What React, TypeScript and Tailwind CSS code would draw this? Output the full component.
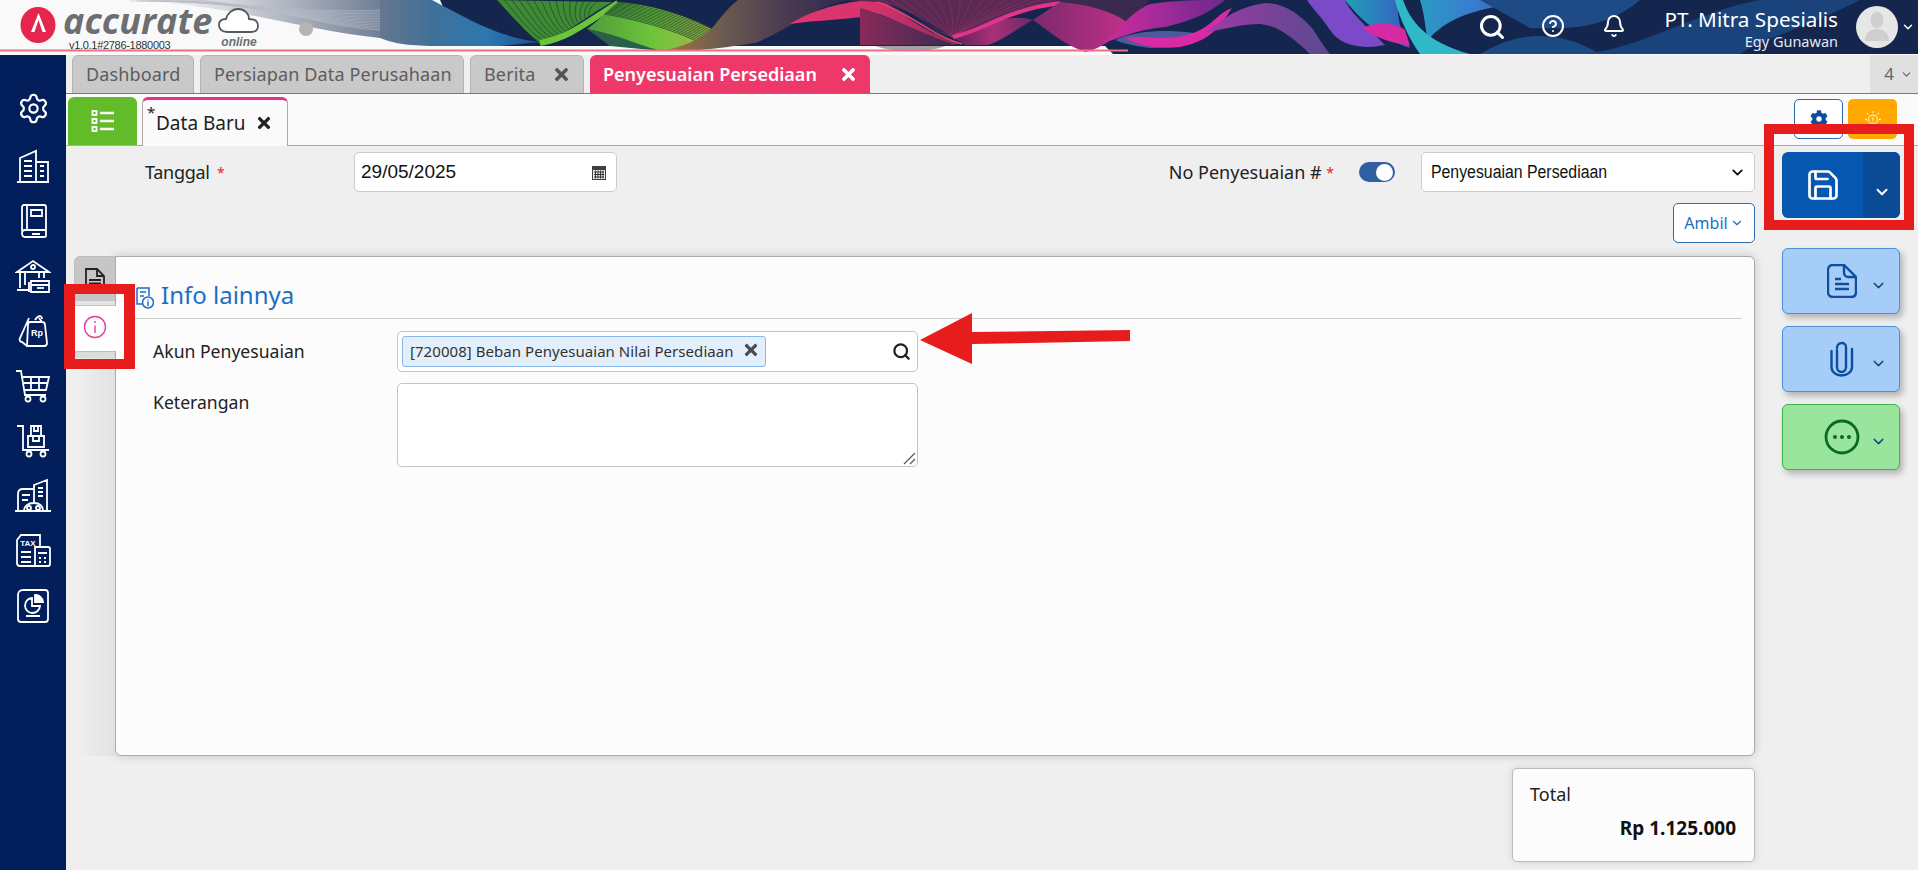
import { Bell, ChevronDown, CircleHelp, Save, Search, Settings } from "lucide-react";
import { FaCog, FaTimes } from "react-icons/fa";

type Curve = number[];

// fan of thin lines between two bezier curves
const Ribbon = ({ from, to, stroke, n = 16, opacity = 0.8 }: { from: Curve; to: Curve; stroke: string; n?: number; opacity?: number }) => {
  const lines = [];
  for (let i = 0; i <= n; i++) {
    const t = i / n;
    const p = from.map((v, k) => Math.round((v + (to[k] - v) * t) * 10) / 10);
    lines.push(
      <path key={i} d={`M${p[0]} ${p[1]}C${p[2]} ${p[3]} ${p[4]} ${p[5]} ${p[6]} ${p[7]}`} stroke={stroke} fill="none" strokeWidth="1" opacity={opacity} />
    );
  }
  return <g>{lines}</g>;
};

const Grad = ({ id, stops }: { id: string; stops: string[] }) => (
  <linearGradient id={id} x1="0" x2="1" y1="0" y2="0">
    {stops.map((c, i) => (
      <stop key={i} offset={i / (stops.length - 1)} stopColor={c} />
    ))}
  </linearGradient>
);

const Banner = () => (
  <svg className="absolute inset-0" width="1918" height="55" viewBox="0 0 1918 55">
    <defs>
      <Grad id="lg" stops={["#f8f8f8", "#dcdee2", "#a9b0bd", "#6f7f97"]} />
      <Grad id="blueR" stops={["#66778f", "#3f7198", "#2b78b0", "#1d4f92"]} />
      <Grad id="gr2" stops={["#4f9a3a", "#6cc43a", "#a5b84a"]} />
      <Grad id="olive" stops={["#a87a3a", "#6a5a50", "#4a3a50", "#2a2a50"]} />
      <Grad id="pinkA" stops={["#e0356f", "#d6336c", "#8a2a5a"]} />
      <Grad id="maroon" stops={["#8a2a5a", "#3a2a50"]} />
      <Grad id="plum" stops={["#5a2558", "#a83078", "#6a2a66"]} />
      <Grad id="mid" stops={["#7a2a6a", "#c0308a"]} />
      <Grad id="mag" stops={["#d02a9a", "#a02a9a", "#6a2a8a"]} />
      <Grad id="purple" stops={["#a03aa8", "#7a4298", "#5a4a90"]} />
      <Grad id="teal" stops={["#1fa0b8", "#3a5ac0"]} />
      <Grad id="tealB" stops={["#2a9ac4", "#3a7ad0", "#2a5aa8"]} />
    </defs>
    <rect width="1918" height="55" fill="#f9f9f9" />
    <path d="M130 0C240 6 300 30 380 38L380 0Z" fill="url(#lg)" />
    <Ribbon from={[130, 1, 230, 0, 300, 14, 380, 10]} to={[200, 0, 280, 8, 330, 28, 380, 30]} stroke="#b8bcc4" n={12} opacity={0.55} />
    <path d="M440 0L1918 0L1918 54L1113 54L1105 46L460 46Z" fill="#14264e" />
    {/* blue ribbon next to the logo */}
    <path d="M380 0L432 0C470 20 500 38 540 42L500 46L440 46C410 46 395 44 380 38Z" fill="url(#blueR)" />
    {/* green */}
    <path d="M497 0L612 2C590 14 565 35 540 44C525 30 510 15 497 0Z" fill="#3f8a35" />
    <Ribbon from={[497, 0, 515, 20, 530, 40, 545, 44]} to={[600, 0, 590, 5, 585, 15, 592, 22]} stroke="#16382a" n={14} opacity={0.6} />
    <path d="M540 43C570 38 590 20 618 3" stroke="#6cc43a" strokeWidth="6" fill="none" />
    <path d="M618 2C660 5 695 20 714 30C710 40 690 48 660 51C640 48 615 35 587 29C600 20 610 8 618 2Z" fill="url(#gr2)" />
    <Ribbon from={[618, 2, 660, 5, 695, 20, 714, 28]} to={[604, 14, 640, 20, 680, 32, 702, 44]} stroke="#16382a" n={12} opacity={0.65} />
    <path d="M587 29C620 35 640 46 662 51L610 46Z" fill="#2a5f4a" />
    {/* olive into pink */}
    <path d="M660 51C700 52 735 46 755 43C775 35 790 25 800 20C815 10 830 4 850 0L738 0C725 10 718 22 712 28C700 40 680 48 660 51Z" fill="url(#olive)" />
    <path d="M790 24C815 8 850 0 880 0C910 18 930 36 960 43L953 45C925 40 905 24 880 14C850 20 815 20 790 24Z" fill="url(#pinkA)" />
    <path d="M860 8C885 14 925 35 955 45L860 45Z" fill="url(#maroon)" />
    <path d="M847 0L1060 0C1030 8 1000 15 953 37C925 20 900 5 877 2Z" fill="#5a2a55" />
    <Ribbon from={[880, 0, 920, 22, 935, 32, 953, 37]} to={[1040, 0, 1000, 12, 975, 24, 953, 37]} stroke="#c0346f" n={14} opacity={0.35} />
    <path d="M877 2C905 10 930 35 962 44" stroke="#e8456f" strokeWidth="1.5" fill="none" />
    <path d="M875 46L945 46C930 52 900 54 875 46Z" fill="#a2a2a8" />
    <path d="M953 38C985 28 1005 12 1033 20C1015 30 1000 42 987 45L965 45Z" fill="url(#plum)" />
    <path d="M953 37C985 30 1005 10 1060 3" stroke="#e0358a" strokeWidth="4" fill="none" />
    {/* middle ribbon */}
    <path d="M1060 0L1150 0L1127 22C1110 10 1085 4 1060 2Z" fill="#3a2a50" />
    <path d="M1033 20L1060 2C1085 4 1110 10 1127 22C1118 34 1105 48 1085 52C1065 45 1050 32 1033 20Z" fill="url(#mid)" />
    <path d="M1103 43C1120 30 1130 12 1150 4C1175 0 1200 0 1225 0C1210 12 1195 20 1165 27C1135 30 1120 38 1103 43Z" fill="url(#mag)" />
    <path d="M1115 40C1140 28 1180 30 1200 34C1190 45 1165 48 1150 48C1135 46 1125 44 1115 40Z" fill="#4a5a9a" />
    <path d="M1125 38C1150 34 1170 44 1200 30C1215 22 1220 12 1232 8C1222 22 1215 40 1180 47C1155 50 1135 44 1125 38Z" fill="#d92aa5" />
    {/* purple + teal */}
    <path d="M1205 33C1225 18 1235 8 1265 3C1285 3 1300 15 1312 28C1320 40 1325 48 1330 54L1310 54C1295 40 1280 26 1260 24C1240 24 1220 30 1205 33Z" fill="url(#purple)" />
    <path d="M1307 0L1345 0C1350 12 1365 25 1385 45C1360 50 1340 45 1330 30C1320 15 1312 8 1307 0Z" fill="#7a4ac8" />
    <path d="M1345 0L1400 0C1395 12 1400 30 1410 48C1385 40 1362 22 1345 0Z" fill="url(#teal)" />
    <path d="M1362 28C1375 22 1395 22 1405 30L1410 46C1390 42 1375 38 1362 28Z" fill="#d62aa5" />
    <path d="M1428 40C1445 20 1470 8 1530 2L1490 0L1420 0C1425 15 1425 30 1428 40Z" fill="url(#tealB)" />
    <path d="M1403 0C1410 20 1425 42 1470 54L1420 54C1410 40 1400 20 1395 0Z" fill="#30b8c8" />
    {/* blue wedges behind the icons */}
    <path d="M1480 54C1520 30 1560 30 1600 54Z" fill="#1c4a82" />
    <path d="M1480 0L1640 0C1610 25 1580 30 1530 28Z" fill="#1e4a86" />
    <path d="M1580 54C1640 50 1700 10 1760 0L1860 0C1800 30 1760 40 1740 54Z" fill="#1b437b" />
    <path d="M0 50.5H1128" stroke="#ee6f86" strokeWidth="2.2" />
  </svg>
);

const Logo = () => (
  <div className="relative z-10 flex w-[320px] items-start pl-[20px]">
    <svg width="36" height="36" viewBox="0 0 36 36" className="mt-[7px] shrink-0">
      <ellipse cx="18" cy="18" rx="17.5" ry="18" fill="#e6254c" />
      <path d="M18.5 6L26 25H22.5L18.5 13L14.5 25H11Z" fill="#fff" />
    </svg>
    <div className="ml-[7px] flex w-[155px] shrink-0 flex-col">
      <span className="mt-[4px] w-fit font-['Open_Sans',sans-serif] text-[36px] leading-[33px] font-bold whitespace-nowrap text-[#6d6e71] italic">accurate</span>
      <span className="mt-[2px] ml-[6px] font-['Liberation_Sans',sans-serif] text-[11px] leading-[13px] tracking-[-0.3px] whitespace-nowrap text-[#333]">v1.0.1#2786-1880003</span>
    </div>
    <div className="flex flex-col items-center">
      <svg width="42" height="27" viewBox="0 0 42 27" className="mt-[7px]">
        <path d="M9 25C3 25 1 21 1 18C1 14 4 12 8 12C9 7 14 2 20 2C27 2 31 7 31 12C37 12 40 15 40 19C40 23 37 25 33 25Z" fill="#fff" stroke="#55585c" strokeWidth="1.8" />
      </svg>
      <span className="mt-[1px] font-['Liberation_Sans',sans-serif] text-[12px] leading-[14px] font-bold text-[#6d6e71] italic">online</span>
    </div>
    <span className="mt-[22px] ml-[39px] h-[14px] w-[14px] shrink-0 rounded-full bg-[#b4b4b4]" />
  </div>
);

const Header = () => (
  <header className="relative flex h-[55px] shrink-0 items-start">
    <Banner />
    <Logo />
    <div className="relative z-10 ml-auto flex items-start text-white">
      <Search className="mt-[13px] mr-[35px]" size={28} strokeWidth={2.6} />
      <CircleHelp className="mt-[14px] mr-[37px]" size={24} strokeWidth={2} />
      <Bell className="mt-[14px] mr-[38px]" size={24} strokeWidth={2} />
      <div className="mt-[5px] mr-[18px] flex flex-col items-end">
        <span className="text-[20.7px] leading-[28px]">PT. Mitra Spesialis</span>
        <span className="text-[14.5px] leading-[17px] text-[#e4e9f2]">Egy Gunawan</span>
      </div>
      <div className="mt-[6px] flex h-[42px] w-[42px] items-center justify-center overflow-hidden rounded-full bg-[#e6e6e6]">
        <svg width="26" height="32" viewBox="0 0 26 32">
          <ellipse cx="13" cy="9" rx="6.5" ry="8" fill="#cfcfcf" />
          <path d="M1 30C1 22 6 18 13 18C20 18 25 22 25 30Z" fill="#cfcfcf" />
        </svg>
      </div>
      <ChevronDown className="mt-[20px] mr-[3px] ml-[3px]" size={14} strokeWidth={2.5} />
    </div>
  </header>
);

const icon = "fill-none stroke-white stroke-[1.8]";

const CityIcon = () => (
  <svg width="36" height="36" viewBox="0 0 36 36" className={icon}>
    <path d="M2 34H34M5 34V10L21 3V34M21 14H33V34M9 13H17M9 18H17M9 23H17M9 28H17M25 18H29M25 23H29M25 28H29" />
  </svg>
);
const BookIcon = () => (
  <svg width="36" height="36" viewBox="0 0 36 36" className={icon}>
    <path d="M7 28V4C7 3 8 2 9 2H29C30 2 31 3 31 4V33C31 34 30 34 29 34H10C8 34 7 32 7 30C7 28 8 27 10 27H31M12 2V27M16 7H27V13H16ZM17 31H25" />
  </svg>
);
const BankIcon = () => (
  <svg width="36" height="36" viewBox="0 0 36 36" className={icon}>
    <path d="M2 14L18 3L34 14ZM5 14V30M10 14V27M24 14V20M29 14V20M2 32H14M14 34V24M16 23H34V34H16ZM16 27H34" />
    <circle cx="18" cy="9" r="2" />
    <path d="M22 30H29" />
  </svg>
);
const TagIcon = () => (
  <svg width="36" height="36" viewBox="0 0 36 36" className={icon}>
    <path d="M14 5L5 25C4 27 5 29 7 29L12 33M12 33H29C31 33 32 32 32 30L30 12C30 10 29 9 27 9H15C14 9 13 10 13 12L12 33ZM24 5L27 9M20 7C23 2 27 2 27 6" />
    <text x="22" y="23" textAnchor="middle" fontSize="9" fontWeight="700" fill="#fff" stroke="none" fontFamily="Liberation Sans, sans-serif">Rp</text>
  </svg>
);
const CartIcon = () => (
  <svg width="36" height="36" viewBox="0 0 36 36" className={icon}>
    <path d="M1 3H6L10 27H31M8 9H34L31 22H10M16 9V22M24 9V22M9 15H33" />
    <circle cx="13" cy="31" r="2.5" />
    <circle cx="28" cy="31" r="2.5" />
  </svg>
);
const TrolleyIcon = () => (
  <svg width="36" height="36" viewBox="0 0 36 36" className={icon}>
    <path d="M2 3H8V27H34M13 13H29V24H13ZM16 3H26V13H16ZM19 3V8H23V3M18 13V18H24V13" />
    <circle cx="14" cy="31" r="2.5" />
    <circle cx="28" cy="31" r="2.5" />
  </svg>
);
const PlantIcon = () => (
  <svg width="38" height="36" viewBox="0 0 38 36" className={icon}>
    <path d="M1 33H37M4 33V16C4 13 6 11 9 11H20V24M8 17H16M8 22H14M20 11V7L33 2V33M24 10H29M24 14H29M24 18H29M10 33C10 28 14 25 20 25C26 25 29 28 29 33" />
    <circle cx="15" cy="30" r="2" />
    <circle cx="24" cy="30" r="2" />
  </svg>
);
const TaxIcon = () => (
  <svg width="36" height="36" viewBox="0 0 36 36" className={icon}>
    <path d="M20 33H5C3 33 2 32 2 30V7L6 2H25V13M6 19H16M6 24H16M6 29H16M20 14H33C34 14 35 15 35 16V31C35 33 34 33 33 33H20ZM23 20H32M24 25H26M29 25H31M24 29H26M29 29H31" />
    <text x="13" y="13" textAnchor="middle" fontSize="8" fontWeight="700" fill="#fff" stroke="none" fontFamily="Liberation Sans, sans-serif">TAX</text>
  </svg>
);
const ReportIcon = () => (
  <svg width="36" height="36" viewBox="0 0 36 36" className={icon}>
    <path d="M8 2H30C32 2 33 3 33 5V31C33 33 32 34 30 34H6C4 34 3 33 3 31V7C3 4 5 2 8 2ZM11 28H25" />
    <path d="M17 10A7.5 7.5 0 1 0 25 18H17Z" />
    <path d="M20 7A7.5 7.5 0 0 1 28 14H20Z" fill="#fff" />
  </svg>
);

const Sidebar = () => (
  <aside className="flex w-[66px] shrink-0 flex-col items-center bg-[#021e5b] pt-[26px]">
    <div className="mb-[2px] flex h-[55px] items-center"><Settings className="text-white" size={33} strokeWidth={1.6} /></div>
    {[CityIcon, BookIcon, BankIcon, TagIcon, CartIcon, TrolleyIcon, PlantIcon, TaxIcon, ReportIcon].map((Icon, i) => (
      <div key={i} className="flex h-[55px] items-center"><Icon /></div>
    ))}
  </aside>
);

const TopTab = ({ label, close, active, width }: { label: string; close?: boolean; active?: boolean; width: string }) => (
  <div className={`flex h-[38px] items-center justify-between rounded-t-[6px] pr-[12px] pl-[13px] text-[18px] ${width} ${active ? "bg-[#ee3869] font-semibold text-white" : "border border-b-0 border-[#b5b5b5] bg-[#c9c9c9] tracking-[0.15px] text-[#5d5d5d]"}`}>
    <span className="whitespace-nowrap">{label}</span>
    {close && <FaTimes size={19} className={active ? "text-white" : "text-[#555]"} />}
  </div>
);

const TopTabs = () => (
  <div className="flex h-[39px] shrink-0 items-end border-b-[1.5px] border-[#d74a80]">
    <div className="ml-[6px] flex gap-[6px]">
      <TopTab label="Dashboard" width="w-[122px]" />
      <TopTab label="Persiapan Data Perusahaan" width="w-[264px]" />
      <TopTab label="Berita" close width="w-[114px]" />
      <TopTab label="Penyesuaian Persediaan" close active width="w-[280px]" />
    </div>
    <div className="ml-auto flex h-[38px] w-[48px] items-center justify-end gap-[6px] bg-[#e0e0e0] pr-[5px] text-[17px] text-[#666]">
      <span>4</span>
      <ChevronDown size={13} />
    </div>
  </div>
);

const ListIcon = () => (
  <svg width="24" height="24" viewBox="0 0 24 24" fill="none" stroke="#fff">
    <rect x="1.5" y="2" width="4" height="4" strokeWidth="1.8" />
    <rect x="1.5" y="10" width="4" height="4" strokeWidth="1.8" />
    <rect x="1.5" y="18" width="4" height="4" strokeWidth="1.8" />
    <path d="M9 4H23M9 12H23M9 20H23" strokeWidth="2.6" />
  </svg>
);

const SubTabs = () => (
  <div className="flex h-[52px] shrink-0 items-start justify-between border-b-[1.5px] border-[#aaaaaa] bg-[#fafafa] pr-[21px] pl-[2px]">
    <div className="mt-[3px] flex gap-[5px]">
      <div className="flex h-[48px] w-[69px] items-center justify-center rounded-t-[6px] bg-[#62bb28]"><ListIcon /></div>
      <div className="relative flex h-[49px] w-[146px] items-center rounded-t-[6px] border-x border-t-[3px] border-x-[#aaa] border-t-[#e5338c] bg-[#fafafa] pl-[13px] text-[19px] text-[#222]">
        <span className="absolute top-[5px] left-[4px] text-[15px] leading-[15px]">*</span>
        <span>Data Baru</span>
        <FaTimes size={18} className="ml-[9px] text-[#222]" />
      </div>
    </div>
    <div className="mt-[5px] flex gap-[5px]">
      <div className="flex h-[40px] w-[49px] items-center justify-center rounded-[5px] border border-[#2d6aa8] bg-white text-[#0d4f9e]"><FaCog size={18} /></div>
      <div className="flex h-[40px] w-[49px] items-center justify-center rounded-[5px] bg-[#ffa800]">
        <svg width="18" height="18" viewBox="0 0 18 18" fill="none" stroke="#ffe9a8" strokeWidth="1.3">
          <circle cx="9" cy="9.5" r="4.5" />
          <path d="M9 7V10.5M9 11.2V12.4M9 1V3M3 3L4.3 4.4M15 3L13.7 4.4M1 9.5H3M15 9.5H17" />
        </svg>
      </div>
    </div>
  </div>
);

const CalendarIcon = () => (
  <svg width="16" height="17" viewBox="0 0 16 17">
    <path d="M1 2H15V16H1Z" fill="#3f3f3f" />
    <rect x="2" y="6" width="12" height="9" fill="#eee" />
    <path d="M3 8H13M3 10.5H13M3 13H13M4.5 6.5V14.5M7 6.5V14.5M9.5 6.5V14.5M12 6.5V14.5" stroke="#333" strokeWidth="1" />
  </svg>
);

const Star = () => <span className="align-[1px] text-[14px] text-[#e5232e]">*</span>;

const FormTop = () => (
  <div className="flex h-[40px] items-center pl-[79px]">
    <label className="w-[209px] text-[18px] tracking-[-0.3px] text-[#222]">Tanggal <span className="ml-[3px]"><Star /></span></label>
    <div className="flex h-[40px] w-[263px] items-center justify-between rounded-[5px] border border-[#ccc] bg-white pr-[9px] pl-[6px] font-['Liberation_Sans',sans-serif] text-[19px] text-[#111]">
      29/05/2025
      <CalendarIcon />
    </div>
    <label className="ml-auto text-[18px] whitespace-nowrap text-[#222]">No Penyesuaian # <Star /></label>
    <div className="mr-[26px] ml-[25px] flex h-[20px] w-[36px] items-center justify-end rounded-full bg-[#2f5ea3] pr-[2px]">
      <span className="h-[17px] w-[17px] rounded-full bg-white" />
    </div>
    <div className="flex h-[40px] w-[334px] items-center justify-between rounded-[5px] border border-[#ccc] bg-white pr-[8px] pl-[9px] font-['Liberation_Sans',sans-serif] text-[18px] text-[#111]">
      <span className="origin-left scale-x-[0.88] whitespace-nowrap">Penyesuaian Persediaan</span>
      <ChevronDown size={17} strokeWidth={2.6} />
    </div>
  </div>
);

const InfoTitleIcon = () => (
  <svg width="18" height="22" viewBox="0 0 18 22" fill="none" stroke="#1a6fc4" strokeWidth="1.5">
    <path d="M1 1H13V9M1 1V17H6M4 5H10M4 9H8" />
    <circle cx="12" cy="15.5" r="5.5" />
    <path d="M12 14.5V19M12 12.5V13.5" />
  </svg>
);

const FormPanel = () => (
  <div className="mt-[13px] ml-[8px] flex h-[500px]">
    <div className="z-10 flex w-[41px] shrink-0 flex-col bg-gradient-to-r from-[#f0f0f0] to-[#e2e2e2]">
      <div className="flex h-[44px] items-start justify-center rounded-tl-[6px] border-t border-l border-[#bdbdbd] bg-[#c6c6c6] pt-[11px]">
        <svg width="20" height="24" viewBox="0 0 20 24" fill="none" stroke="#222" strokeWidth="1.8">
          <path d="M1 1H12L19 8V23H1ZM12 1V8H19M4 12H16M4 15.5H16M4 19H16" />
        </svg>
      </div>
      <div className="h-[6px] border-y border-l border-[#c4c4c4] bg-[#e4e4e4]" />
      <div className="-mr-[2px] flex h-[45px] items-center justify-center bg-white pr-[2px] pb-[3px]">
        <svg width="24" height="24" viewBox="0 0 24 24" fill="none" stroke="#e33f9b" strokeWidth="1.4">
          <circle cx="12" cy="12" r="10.5" />
          <path d="M12 10.5V18M12 6V8" />
        </svg>
      </div>
      <div className="h-[7px] rounded-tl-[3px] border-t border-l border-[#bdbdbd] bg-[#dcdcdc]" />
    </div>
    <div className="flex-1 rounded-r-[6px] rounded-bl-[6px] border border-[#aaaaaa] bg-[#fcfcfc] pr-[12px] pl-[18px] shadow-[0_0_10px_rgba(0,0,0,0.18)]">
      <div className="flex h-[62px] items-end border-b border-[#d0d0d0] pb-[6px] pl-[2px] text-[24px] leading-[34px] text-[#1a6fc4]">
        <span className="mr-[7px] mb-[3px]"><InfoTitleIcon /></span>
        Info lainnya
      </div>
      <div className="mt-[12px] flex items-center pl-[19px]">
        <label className="w-[244px] text-[17.6px] text-[#222]">Akun Penyesuaian</label>
        <div className="flex h-[41px] w-[521px] items-center justify-between rounded-[5px] border border-[#c4c4c4] bg-white pr-[6px] pl-[4px]">
          <div className="flex h-[31px] w-[364px] items-center justify-between rounded-[3px] border border-[#8ab8ea] bg-[#e3effb] pr-[5px] pl-[7px] text-[15px] tracking-[0.05px] whitespace-nowrap text-[#333]">
            [720008] Beban Penyesuaian Nilai Persediaan
            <FaTimes size={18} className="mb-[3px] text-[#4b4b57]" />
          </div>
          <Search size={19} strokeWidth={2.8} className="text-[#222]" />
        </div>
      </div>
      <div className="mt-[11px] flex items-start pl-[19px]">
        <label className="mt-[6px] w-[244px] text-[17.6px] text-[#222]">Keterangan</label>
        <div className="relative h-[84px] w-[521px] rounded-[5px] border border-[#c4c4c4] bg-white">
          <svg width="14" height="14" viewBox="0 0 14 14" className="absolute right-[1px] bottom-[1px]" stroke="#555" strokeWidth="1.2">
            <path d="M2 13L13 2M8 13L13 8" />
          </svg>
        </div>
      </div>
    </div>
  </div>
);

const DocIcon = () => (
  <svg width="30" height="34" viewBox="0 0 30 34" fill="none" stroke="#0d4f9e" strokeWidth="2.4">
    <path d="M6 1H17L29 13V28C29 31 27 33 24 33H6C3 33 1 31 1 28V6C1 3 3 1 6 1ZM17 1V9C17 11 19 13 21 13H29M8 15H14M8 20H22M8 25H22" />
  </svg>
);

const ClipIcon = () => (
  <svg width="24" height="36" viewBox="0 0 24 36" fill="none" stroke="#0d4f9e" strokeWidth="2.4" strokeLinecap="round">
    <path d="M7 9V26C7 29 9 31 11.5 31C14 31 16 29 16 26V6C16 3.5 14 2 12 2C9 2 7 4 7 7M1.5 10V26C1.5 31 6 34.5 11.5 34.5C17 34.5 22 31 22 26V8" />
  </svg>
);

const DotsIcon = () => (
  <svg width="36" height="36" viewBox="0 0 36 36" fill="none" stroke="#0a6b1e" strokeWidth="2.8">
    <circle cx="18" cy="18" r="16" />
    <circle cx="11" cy="18" r="2" fill="#0a6b1e" stroke="none" />
    <circle cx="18" cy="18" r="2" fill="#0a6b1e" stroke="none" />
    <circle cx="25" cy="18" r="2" fill="#0a6b1e" stroke="none" />
  </svg>
);

const ActionBtn = ({ color, children }: { color: "blue" | "green"; children: React.ReactNode }) => (
  <div className={`flex h-[66px] w-[118px] items-center rounded-[6px] border pl-[41px] shadow-[3px_4px_6px_rgba(0,0,0,0.25)] ${color === "blue" ? "border-[#4a90d9] bg-[#a6cdf8]" : "border-[#3cb54a] bg-[#9ae59e]"}`}>
    <div className="flex w-[36px] justify-center">{children}</div>
    <ChevronDown size={17} strokeWidth={2} className="mt-[8px] ml-[10px] text-[#1a4a80]" />
  </div>
);

const ActionColumn = () => (
  <div className="flex w-[163px] shrink-0 flex-col items-start pt-[6px] pl-[27px]">
    <div className="flex h-[66px] w-[118px] overflow-hidden rounded-[6px] bg-[#0557b0] text-white">
      <div className="flex w-[81px] items-center justify-center"><Save size={36} strokeWidth={1.8} /></div>
      <div className="flex w-[37px] items-center justify-center bg-[#0b4b96] pt-[14px]"><ChevronDown size={18} strokeWidth={2.6} /></div>
    </div>
    <div className="mt-[30px] flex flex-col gap-[12px]">
      <ActionBtn color="blue"><DocIcon /></ActionBtn>
      <ActionBtn color="blue"><ClipIcon /></ActionBtn>
      <ActionBtn color="green"><DotsIcon /></ActionBtn>
    </div>
  </div>
);

// annotations drawn on top of the screenshot
const Annotations = () => (
  <>
    <div className="absolute top-[284px] left-[64px] z-20 h-[85px] w-[71px] border-x-[11px] border-t-[10px] border-b-[10px] border-[#e71c1c]" />
    <div className="absolute top-[124px] left-[1764px] z-20 h-[106px] w-[150px] border-[10px] border-[#e71c1c]" />
    <svg className="absolute top-[310px] left-[918px] z-20" width="215" height="58" viewBox="0 0 215 58">
      <path d="M2 30L54 3V22L212 20V31L54 34V54Z" fill="#e71c1c" />
    </svg>
  </>
);

export default function App() {
  return (
    <div className="relative flex h-[870px] w-[1918px] flex-col overflow-hidden bg-[#efefef] font-['Noto_Sans',sans-serif]">
      <Header />
      <div className="flex min-h-0 flex-1">
        <Sidebar />
        <main className="flex min-w-0 flex-1 flex-col">
          <TopTabs />
          <SubTabs />
          <div className="flex">
            <div className="min-w-0 flex-1 pt-[6px]">
              <FormTop />
              <div className="mt-[11px] flex justify-end">
                <div className="flex h-[40px] w-[82px] items-center justify-center gap-[2px] rounded-[5px] border border-[#2d6aa8] bg-white text-[16px] text-[#1a6fc4]">
                  Ambil
                  <ChevronDown size={14} strokeWidth={2} />
                </div>
              </div>
              <FormPanel />
              <div className="mt-[12px] ml-auto h-[94px] w-[243px] rounded-[5px] border border-[#bbb] bg-[#fcfcfc] pt-[12px] pr-[18px] pl-[17px] shadow-[0_0_8px_rgba(0,0,0,0.12)]">
                <div className="text-[18px] leading-[26px] text-[#222]">Total</div>
                <div className="mt-[8px] text-right text-[19px] leading-[26px] font-bold text-[#111]">Rp 1.125.000</div>
              </div>
            </div>
            <ActionColumn />
          </div>
        </main>
      </div>
      <Annotations />
    </div>
  );
}
